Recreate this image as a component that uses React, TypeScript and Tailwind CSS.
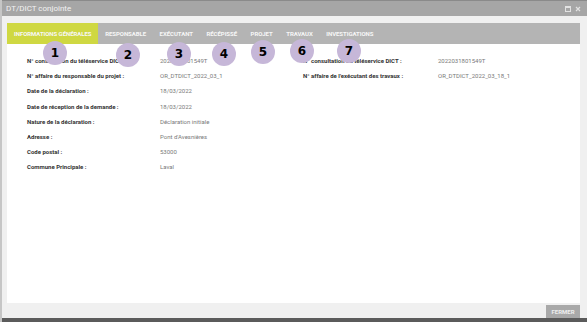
const tabs = ['RESPONSABLE', 'EXÉCUTANT', 'RÉCÉPISSÉ', 'PROJET', 'TRAVAUX', 'INVESTIGATIONS'];

const leftRows: [string, string][] = [
  ['N° consultation du téléservice DICT :', '20220318015497'.replace('7', 'T')],
  ['N° affaire du responsable du projet :', 'OR_DTDICT_2022_03_1'],
  ['Date de la déclaration :', '18/03/2022'],
  ['Date de réception de la demande :', '18/03/2022'],
  ['Nature de la déclaration :', 'Déclaration initiale'],
  ['Adresse :', "Pont d'Avesnières"],
  ['Code postal :', '53000'],
  ['Commune Principale :', 'Laval'],
];

const rightRows: [string, string][] = [
  ['N° consultation du téléservice DICT :', '20220318015497'.replace('7', 'T')],
  ["N° affaire de l'exécutant des travaux :", 'OR_DTDICT_2022_03_18_1'],
];

const badges = [
  { n: '1', cls: 'left-[41px] top-[41px]' },
  { n: '2', cls: 'left-[114px] top-[43px]' },
  { n: '3', cls: 'left-[165px] top-[42px]' },
  { n: '4', cls: 'left-[210px] top-[42px]' },
  { n: '5', cls: 'left-[249px] top-[40px]' },
  { n: '6', cls: 'left-[288px] top-[39px]' },
  { n: '7', cls: 'left-[335px] top-[39px]' },
];

function Row({ label, value, labelW }: { label: string; value: string; labelW: string }) {
  return (
    <div className="flex items-center h-[15.2px]">
      <div className={`${labelW} shrink-0 font-bold text-[#333333]`}>{label}</div>
      <div className="text-[#7a7a7a]">{value}</div>
    </div>
  );
}

export default function App() {
  return (
    <div className="relative w-[587px] h-[322px] overflow-hidden bg-[#f0f0f0] border-l-2 border-[#c6c6c6] flex flex-col font-['Roboto',sans-serif]">
      {/* title bar */}
      <div className="h-[16px] shrink-0 bg-[#a6a6a6] border-t border-[#8a8a8a] flex items-center justify-between pl-[4px] pr-[6px]">
        <span className="text-[8px] text-[#f2f2f2] leading-none">DT/DICT conjointe</span>
        <div className="flex items-center gap-[4px]">
          <svg width="6" height="6" viewBox="0 0 6 6">
            <rect x="0.5" y="0.5" width="5" height="5" fill="none" stroke="#e2e2e2" strokeWidth="1" />
            <rect x="0.5" y="0.5" width="5" height="1.5" fill="#e2e2e2" />
          </svg>
          <svg width="6" height="6" viewBox="0 0 6 6">
            <path d="M1 1 L5 5 M5 1 L1 5" stroke="#e2e2e2" strokeWidth="1.2" />
          </svg>
        </div>
      </div>

      {/* body */}
      <div className="flex-1 flex flex-col pl-[5px] pr-[7px] pt-[7px]">
        <div className="flex-1 bg-white flex flex-col">
          <div className="h-[21px] bg-[#b4b4b4] flex items-stretch text-[6px] tracking-[-0.05px] font-bold text-[#f7f7f7]">
            <div className="bg-[#cfd842] px-[7px] flex items-center">INFORMATIONS GÉNÉRALES</div>
            {tabs.map((t) => (
              <div key={t} className="px-[6.8px] flex items-center">
                {t}
              </div>
            ))}
          </div>

          <div className="flex pl-[20px] pt-[9px] text-[6px]">
            <div className="w-[276px]">
              {leftRows.map(([l, v]) => (
                <Row key={l} label={l} value={v} labelW="w-[133px]" />
              ))}
            </div>
            <div>
              {rightRows.map(([l, v]) => (
                <Row key={l} label={l} value={v} labelW="w-[135px]" />
              ))}
            </div>
          </div>
        </div>
      </div>

      {/* footer */}
      <div className="h-[15px] shrink-0 flex justify-end items-start pt-[2px] pr-[7px]">
        <button className="h-[13px] w-[34px] bg-[#a9a9a9] text-[6px] font-bold text-[#eeeeee] flex items-center justify-center">
          FERMER
        </button>
      </div>
      <div className="h-[4px] shrink-0 bg-[#5b5b5b]" />

      {/* numbered badges */}
      {badges.map((b) => (
        <div
          key={b.n}
          className={`absolute ${b.cls} w-[24px] h-[24px] rounded-full bg-[#c6b7d8] flex items-center justify-center font-['DejaVu_Sans',sans-serif] font-bold text-[12px] text-black leading-none`}
        >
          {b.n}
        </div>
      ))}
    </div>
  );
}
